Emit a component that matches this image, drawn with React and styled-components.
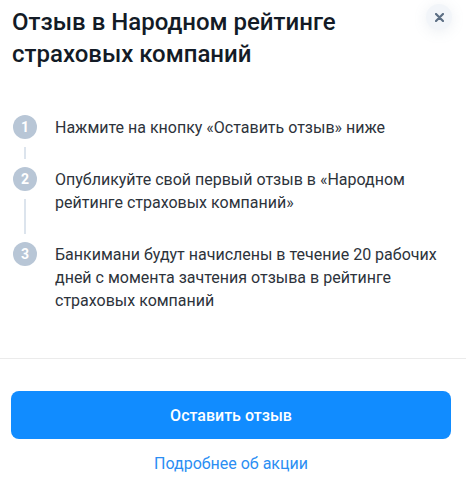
import React from 'react';
import styled, { createGlobalStyle } from 'styled-components';

const GlobalStyle = createGlobalStyle`
  body {
    margin: 0;
    background: #ffffff;
    font-family: Roboto, "Liberation Sans", Arial, sans-serif;
  }
`;

const Modal = styled.div`
  width: 466px;
  height: 482px;
  display: flex;
  flex-direction: column;
  box-sizing: border-box;
  overflow: hidden;
`;

const Header = styled.div`
  display: flex;
  align-items: flex-start;
  justify-content: space-between;
  padding: 6px 14px 0 12px;
`;

const Title = styled.h2`
  margin: 0;
  font-size: 24px;
  line-height: 32px;
  font-weight: 500;
  color: #131b26;
  max-width: 360px;
`;

const CloseButton = styled.button`
  width: 26px;
  height: 26px;
  margin-top: -2px;
  border: none;
  border-radius: 50%;
  background: #f2f5f9;
  box-shadow: 0 2px 14px rgba(120, 140, 170, 0.14);
  display: flex;
  align-items: center;
  justify-content: center;
  padding: 0;
  cursor: pointer;
`;

const Steps = styled.ol`
  list-style: none;
  margin: 45px 14px 0 13px;
  padding: 0;
`;

const Step = styled.li`
  display: flex;
  gap: 18px;
`;

const Marker = styled.div`
  width: 24px;
  flex-shrink: 0;
  display: flex;
  flex-direction: column;
  align-items: center;
`;

const Circle = styled.span`
  width: 24px;
  height: 24px;
  border-radius: 50%;
  background: #b8c6d6;
  color: #ffffff;
  font-size: 14px;
  font-weight: 700;
  display: flex;
  align-items: center;
  justify-content: center;
`;

const Connector = styled.span`
  flex: 1;
  width: 2px;
  margin: 8px 0;
  background: #dce4ed;
`;

const StepText = styled.p`
  margin: 1px 0 0;
  padding-bottom: ${p => (p.$last ? '0' : '28px')};
  font-size: 16px;
  line-height: 23px;
  color: #2d333b;
`;

const Divider = styled.hr`
  margin: 46px 0 0;
  border: none;
  border-top: 1px solid #ebebeb;
`;

const Footer = styled.div`
  display: flex;
  flex-direction: column;
  align-items: center;
  gap: 14px;
  padding: 32px 15px 0 11px;
`;

const PrimaryButton = styled.button`
  width: 100%;
  height: 48px;
  border: none;
  border-radius: 8px;
  background: #118cff;
  color: #ffffff;
  font-family: inherit;
  font-size: 16px;
  font-weight: 500;
  cursor: pointer;
`;

const MoreLink = styled.a`
  font-size: 16px;
  line-height: 22px;
  color: #2b8ef3;
  text-decoration: none;
  cursor: pointer;
`;

const steps = [
  'Нажмите на кнопку «Оставить отзыв» ниже',
  'Опубликуйте свой первый отзыв в «Народном рейтинге страховых компаний»',
  'Банкимани будут начислены в течение 20 рабочих дней с момента зачтения отзыва в рейтинге страховых компаний'
];

export default function App() {
  return (
    <>
      <GlobalStyle />
      <Modal>
        <Header>
          <Title>Отзыв в Народном рейтинге страховых компаний</Title>
          <CloseButton aria-label="Закрыть">
            <svg width="9" height="9" viewBox="0 0 9 9">
              <path d="M1 1L8 8M8 1L1 8" stroke="#5d6f84" strokeWidth="2.2" strokeLinecap="round" />
            </svg>
          </CloseButton>
        </Header>

        <Steps>
          {steps.map((text, i) => {
            const last = i === steps.length - 1;
            return (
              <Step key={i}>
                <Marker>
                  <Circle>{i + 1}</Circle>
                  {!last && <Connector />}
                </Marker>
                <StepText $last={last}>{text}</StepText>
              </Step>
            );
          })}
        </Steps>

        <Divider />

        <Footer>
          <PrimaryButton>Оставить отзыв</PrimaryButton>
          <MoreLink>Подробнее об акции</MoreLink>
        </Footer>
      </Modal>
    </>
  );
}
